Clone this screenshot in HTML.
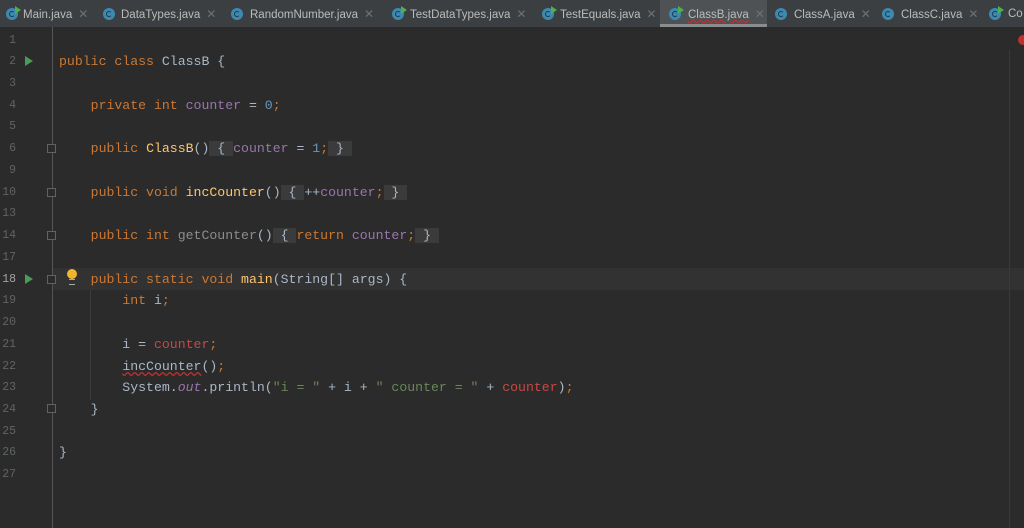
<!DOCTYPE html>
<html><head><meta charset="utf-8"><style>
body{margin:0;width:1024px;height:528px;background:#2b2b2b;overflow:hidden;position:relative;font-family:"Liberation Mono",monospace}
.tabs{position:absolute;left:0;top:0;width:1024px;height:27px;background:#3c3f41;}
.tab{position:absolute;top:0;height:27px;font:11.5px "Liberation Sans",sans-serif;color:#bbbbbb;line-height:29px;white-space:nowrap}
.ic{position:absolute;top:8px;width:12px;height:12px;border-radius:50%;background:#3e89b0;}
.ic:after{content:"";position:absolute;left:3px;top:3px;width:4px;height:4px;border:1.5px solid #1d3a4a;border-right-color:transparent;border-radius:50%}
.run:before{content:"";position:absolute;right:-3px;top:-2px;border-left:6px solid #4caf50;border-top:4px solid transparent;border-bottom:4px solid transparent}
.x{color:#6e7173;margin-left:6px;font-size:12px}
.sel{background:#4e5254}
.sel:after{content:"";position:absolute;left:0;right:0;bottom:0;height:3px;background:#8a8d8f}
.gut{position:absolute;left:52px;top:27px;width:1px;height:501px;background:#555}
.cur{position:absolute;left:53px;top:268px;width:971px;height:22px;background:#323232}
.ln{position:absolute;left:0;width:16px;text-align:right;color:#5f6366;font-size:11.5px}
.code{position:absolute;left:59px;font-size:13.2px;color:#a9b7c6;white-space:pre;line-height:22px}
.k{color:#cc7832}.f{color:#9876aa}.m{color:#ffc66d}.n{color:#6897bb}.s{color:#6a8759}.r{color:#c74745}.g{color:#8c8c8c}
.fb{background:#3b3b3b;color:#a9b7c6}
.play{position:absolute;left:25px;border-left:8px solid #499c54;border-top:5px solid transparent;border-bottom:5px solid transparent}
.fold{position:absolute;left:47px;width:7px;height:7px;border:1px solid #5f6366;background:#2b2b2b}
.guide{position:absolute;left:90px;width:1px;background:#3b3b3b}
</style></head><body>
<div class="tabs">
 <div class="tab" style="left:0;width:95px"><span class="ic run" style="left:6px"></span><span style="margin-left:23px">Main.java</span><span class="x">✕</span></div>
 <div class="tab" style="left:97px"><span class="ic" style="left:6px"></span><span style="margin-left:24px">DataTypes.java</span><span class="x">✕</span></div>
 <div class="tab" style="left:225px"><span class="ic" style="left:6px"></span><span style="margin-left:25px">RandomNumber.java</span><span class="x">✕</span></div>
 <div class="tab" style="left:386px"><span class="ic run" style="left:6px"></span><span style="margin-left:24px">TestDataTypes.java</span><span class="x">✕</span></div>
 <div class="tab" style="left:536px"><span class="ic run" style="left:6px"></span><span style="margin-left:24px">TestEquals.java</span><span class="x">✕</span></div>
 <div class="tab sel" style="left:660px;width:107px"><span class="ic run" style="left:9px"></span><span style="margin-left:28px;text-decoration:underline wavy #c03030">ClassB.java</span><span class="x">✕</span></div>
 <div class="tab" style="left:769px"><span class="ic" style="left:6px"></span><span style="margin-left:25px">ClassA.java</span><span class="x">✕</span></div>
 <div class="tab" style="left:876px"><span class="ic" style="left:6px"></span><span style="margin-left:25px">ClassC.java</span><span class="x">✕</span></div>
 <div class="tab" style="left:983px"><span class="ic run" style="left:6px"></span><span style="margin-left:25px">Co</span></div>
</div>
<div class="cur"></div>
<div class="gut"></div>
<div style="position:absolute;left:1009px;top:50px;width:1px;height:478px;background:#3a3a3a"></div>
<div style="position:absolute;left:1018px;top:35px;width:10px;height:10px;border-radius:50%;background:#c0302c"></div>
<div class="guide" style="top:290px;height:110px"></div>
<div class="play" style="top:56px"></div>
<div class="play" style="top:274px"></div>
<div class="fold" style="top:144px"></div>
<div class="fold" style="top:188px"></div>
<div class="fold" style="top:231px"></div>
<div class="fold" style="top:275px"></div>
<div class="fold" style="top:404px"></div>
<div style="position:absolute;left:67px;top:269px;width:10px;height:10px;border-radius:50%;background:#f0b52c"></div>
<div style="position:absolute;left:69px;top:279px;width:6px;height:4px;border-top:1px solid #aaa;border-bottom:1px solid #aaa"></div>
<div class="ln" style="top:34px">1</div><div class="ln" style="top:55px">2</div><div class="ln" style="top:77px">3</div><div class="ln" style="top:99px">4</div><div class="ln" style="top:120px">5</div><div class="ln" style="top:142px">6</div><div class="ln" style="top:164px">9</div><div class="ln" style="top:186px">10</div><div class="ln" style="top:207px">13</div><div class="ln" style="top:229px">14</div><div class="ln" style="top:251px">17</div><div class="ln" style="top:273px;color:#a4a3a3">18</div><div class="ln" style="top:294px">19</div><div class="ln" style="top:316px">20</div><div class="ln" style="top:338px">21</div><div class="ln" style="top:360px">22</div><div class="ln" style="top:381px">23</div><div class="ln" style="top:403px">24</div><div class="ln" style="top:425px">25</div><div class="ln" style="top:446px">26</div><div class="ln" style="top:468px">27</div>
<div class="code" style="top:51px"><span class="k">public class</span> ClassB {</div>
<div class="code" style="top:95px">    <span class="k">private int</span> <span class="f">counter</span> = <span class="n">0</span><span class="k">;</span></div>
<div class="code" style="top:138px">    <span class="k">public</span> <span class="m">ClassB</span>()<span class="fb"> { </span><span class="f">counter</span> = <span class="n">1</span><span class="k">;</span><span class="fb"> } </span></div>
<div class="code" style="top:182px">    <span class="k">public void</span> <span class="m">incCounter</span>()<span class="fb"> { </span>++<span class="f">counter</span><span class="k">;</span><span class="fb"> } </span></div>
<div class="code" style="top:225px">    <span class="k">public int</span> <span class="g">getCounter</span>()<span class="fb"> { </span><span class="k">return</span> <span class="f">counter</span><span class="k">;</span><span class="fb"> } </span></div>
<div class="code" style="top:269px">    <span class="k">public static void</span> <span class="m">main</span>(String[] args) {</div>
<div class="code" style="top:290px">        <span class="k">int</span> i<span class="k">;</span></div>
<div class="code" style="top:334px">        i = <span class="r">counter</span><span class="k">;</span></div>
<div class="code" style="top:356px">        <span style="text-decoration:underline wavy #c03030">incCounter</span>()<span class="k">;</span></div>
<div class="code" style="top:377px">        System.<span class="f" style="font-style:italic">out</span>.println(<span class="s">"i = "</span> + i + <span class="s">" counter = "</span> + <span class="r">counter</span>)<span class="k">;</span></div>
<div class="code" style="top:399px">    }</div>
<div class="code" style="top:442px">}</div>
</body></html>
